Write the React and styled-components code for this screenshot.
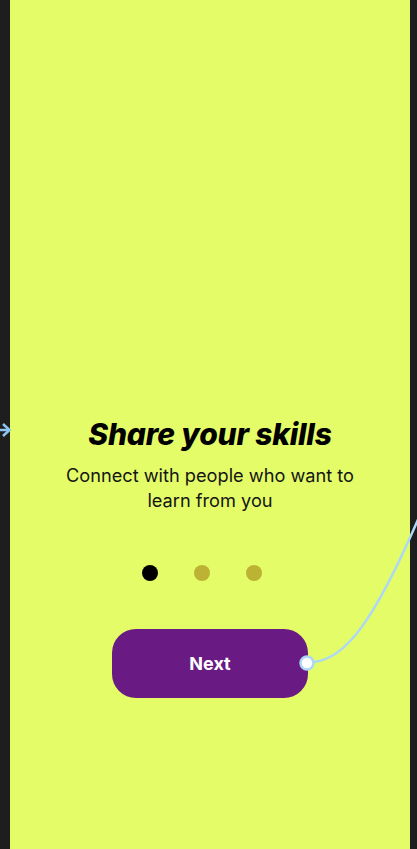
import React, { useState } from 'react'
import styled, { createGlobalStyle } from 'styled-components'

const GlobalStyle = createGlobalStyle`
  html, body {
    margin: 0;
    padding: 0;
    background: #1e1e1e;
  }
  * { box-sizing: border-box; }
`

// the figma-ish canvas: dark backdrop with one phone frame on it
const Stage = styled.div`
  position: relative;
  height: 849px;
  width: 417px;
  padding-left: 10px;
  overflow: hidden;
  background: #1e1e1e;
`

const Screen = styled.div`
  width: 400px;
  height: 849px;
  background: #e3fc68;
  display: flex;
  flex-direction: column;
  align-items: center;
  padding-top: 417px;
  font-family: Inter, "Liberation Sans", sans-serif;
`

const Title = styled.h1`
  margin: 0;
  font-size: 30px;
  line-height: 34px;
  font-weight: 800;
  font-style: italic;
  color: #000;
  letter-spacing: -0.2px;
`

const Subtitle = styled.p`
  margin: 12px 0 0;
  width: 310px;
  text-align: center;
  font-size: 18.2px;
  line-height: 25px;
  color: #151515;
`

// dots sit a little left of centre in the design
const Dots = styled.div`
  display: flex;
  gap: 36px;
  margin-top: 52px;
  padding-right: 16px;
`

const Dot = styled.span`
  width: 16px;
  height: 16px;
  border-radius: 50%;
  background: ${p => (p.$active ? '#000' : '#bcb335')};
`

const NextButton = styled.button`
  margin-top: 48px;
  width: 196px;
  height: 69px;
  border: none;
  border-radius: 24px;
  background: #691a83;
  color: #fff;
  font-family: Inter, "Liberation Sans", sans-serif;
  font-size: 18px;
  font-weight: 700;
  cursor: pointer;
`

// prototype connection lines drawn on top of everything
const Wires = styled.svg`
  position: absolute;
  left: 0;
  top: 0;
  pointer-events: none;
`

const slides = [
  { title: 'Share your skills', text: 'Connect with people who want to learn from you' },
]

export default function App() {
  const [step, setStep] = useState(0)
  const slide = slides[0]

  return (
    <>
      <GlobalStyle />
      <Stage>
        <Screen>
          <Title>{slide.title}</Title>
          <Subtitle>{slide.text}</Subtitle>
          <Dots>
            {[0, 1, 2].map(i => (
              <Dot key={i} $active={i === step} />
            ))}
          </Dots>
          <NextButton onClick={() => setStep((step + 1) % 3)}>Next</NextButton>
        </Screen>

        <Wires width="417" height="849" viewBox="0 0 417 849">
          <path d="M0 430 H9" stroke="#8ec6f2" strokeWidth="2.5" fill="none" />
          <path d="M3 424 L9.5 430 L3 436" stroke="#8ec6f2" strokeWidth="2.5" fill="none" />
          <path
            d="M313 662 C345 660, 375 620, 420 515"
            stroke="#acd7f5"
            strokeWidth="2.5"
            fill="none"
          />
          <circle cx="307" cy="663" r="6.5" fill="#fff" stroke="#acd7f5" strokeWidth="2.5" />
        </Wires>
      </Stage>
    </>
  )
}
